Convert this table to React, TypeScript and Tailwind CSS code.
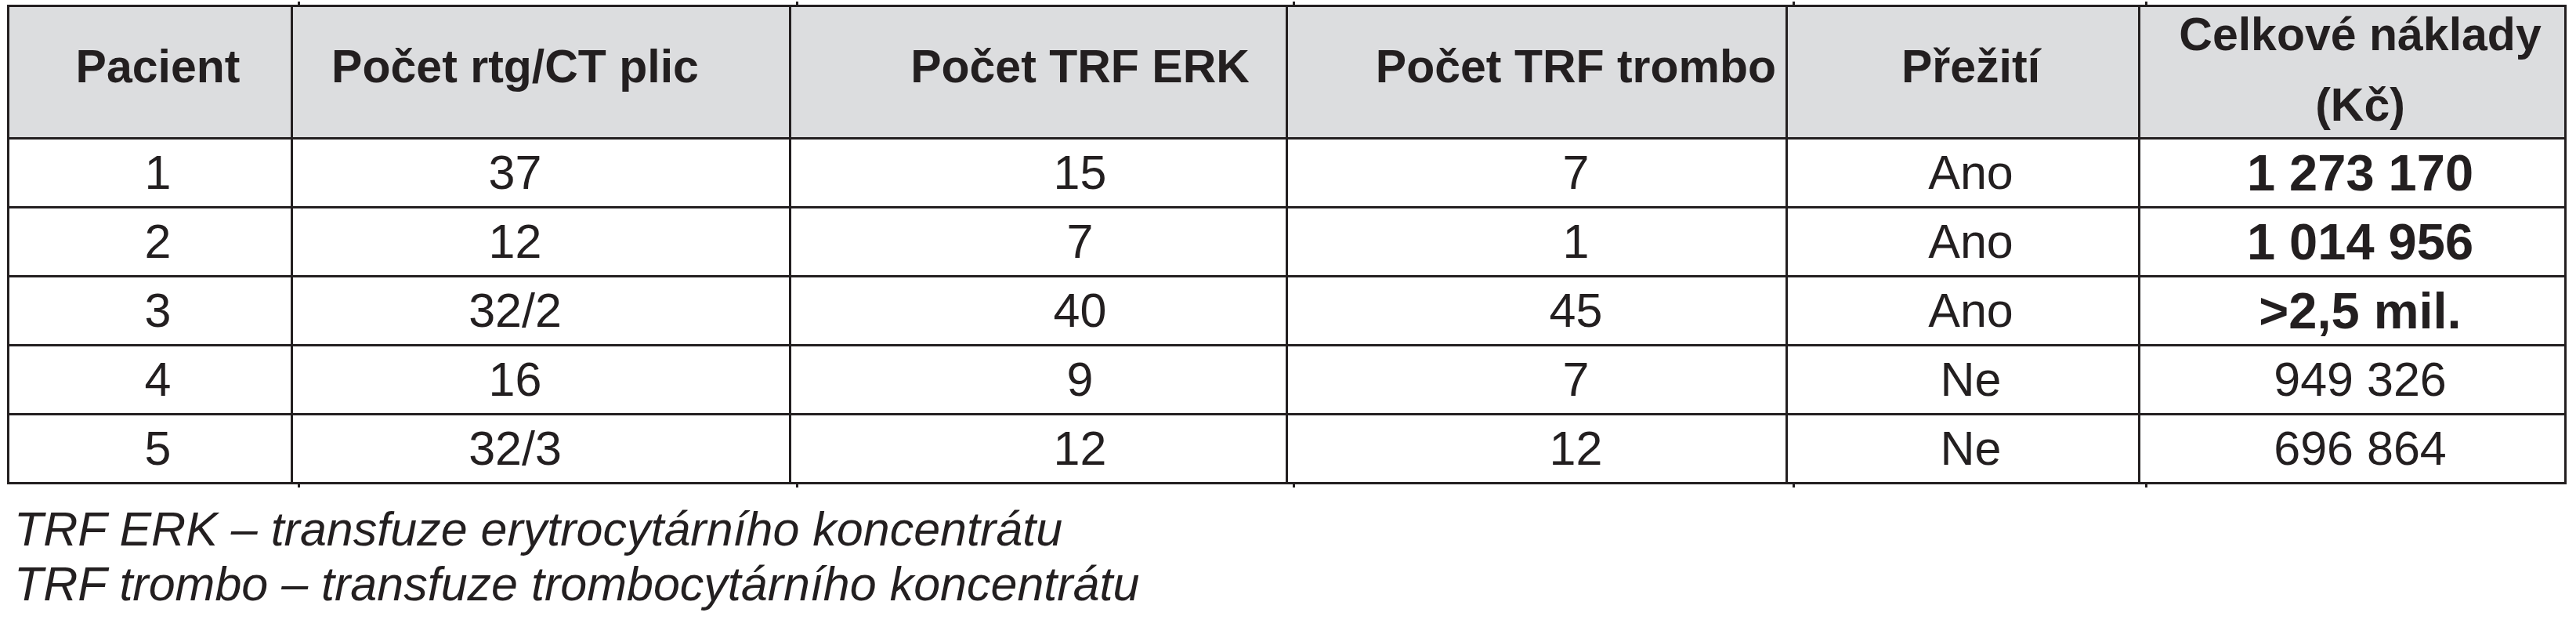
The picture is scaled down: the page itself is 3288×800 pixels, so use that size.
const INK = "#231f20";

type Col = { w: string; pad: string };

// column widths include the 3px right border
const cols: Col[] = [
  { w: "w-[362px]", pad: "pl-[20px]" },
  { w: "w-[636px]", pad: "pr-[66px]" },
  { w: "w-[634px]", pad: "pl-[106px]" },
  { w: "w-[638px]", pad: "pl-[100px]" },
  { w: "w-[450px]", pad: "pl-[20px]" },
  { w: "w-[544px]", pad: "pl-[20px]" },
];

const headers = [
  "Pacient",
  "Počet rtg/CT plic",
  "Počet TRF ERK",
  "Počet TRF trombo",
  "Přežití",
  "Celkové náklady (Kč)",
];

const rows: { cells: string[]; boldCost: boolean }[] = [
  { cells: ["1", "37", "15", "7", "Ano", "1 273 170"], boldCost: true },
  { cells: ["2", "12", "7", "1", "Ano", "1 014 956"], boldCost: true },
  { cells: ["3", "32/2", "40", "45", "Ano", ">2,5 mil."], boldCost: true },
  { cells: ["4", "16", "9", "7", "Ne", "949 326"], boldCost: false },
  { cells: ["5", "32/3", "12", "12", "Ne", "696 864"], boldCost: false },
];

function TickRow() {
  // short stubs of the inner column rules poking past the frame
  return (
    <div className="flex h-[4px] pl-[12px]">
      {cols.map((c, i) => (
        <div
          key={i}
          className={`${c.w} shrink-0 ${i < cols.length - 1 ? "border-r-[3px] border-[#231f20]" : ""}`}
        />
      ))}
    </div>
  );
}

export default function App() {
  return (
    <div
      className="w-[3288px] h-[800px] bg-white pt-[2px] pl-[9px] text-[#231f20]"
      style={{ fontFamily: '"Liberation Sans", Arial, sans-serif' }}
    >
      <TickRow />
      <div className="w-[3267px] border-l-[3px] border-t-[3px] border-[#231f20]">
        {/* header */}
        <div className="flex h-[169px] bg-[#dcdddf]">
          {headers.map((h, i) => (
            <div
              key={i}
              className={`${cols[i].w} ${cols[i].pad} shrink-0 border-r-[3px] border-b-[3px] border-[#231f20] flex items-center justify-center text-center font-bold text-[59px] leading-[90px] ${i === 5 ? "pb-[6px]" : "pb-[14px]"}`}
            >
              {i === 5 ? (
                <span>
                  Celkové náklady
                  <br />
                  (Kč)
                </span>
              ) : (
                <span className="whitespace-nowrap">{h}</span>
              )}
            </div>
          ))}
        </div>
        {/* body */}
        {rows.map((r, ri) => (
          <div key={ri} className="flex h-[88px] bg-white">
            {r.cells.map((v, ci) => (
              <div
                key={ci}
                className={`${cols[ci].w} ${cols[ci].pad} shrink-0 border-r-[3px] border-b-[3px] border-[#231f20] flex items-center justify-center whitespace-nowrap leading-none ${ci === 5 && r.boldCost ? "font-bold text-[65px]" : "text-[61px]"}`}
              >
                {v}
              </div>
            ))}
          </div>
        ))}
      </div>
      <TickRow />
      <div className="pt-[18px] pl-[9px] italic text-[61px] leading-[70px]" style={{ color: INK }}>
        <p>TRF ERK – transfuze erytrocytárního koncentrátu</p>
        <p>TRF trombo – transfuze trombocytárního koncentrátu</p>
      </div>
    </div>
  );
}
